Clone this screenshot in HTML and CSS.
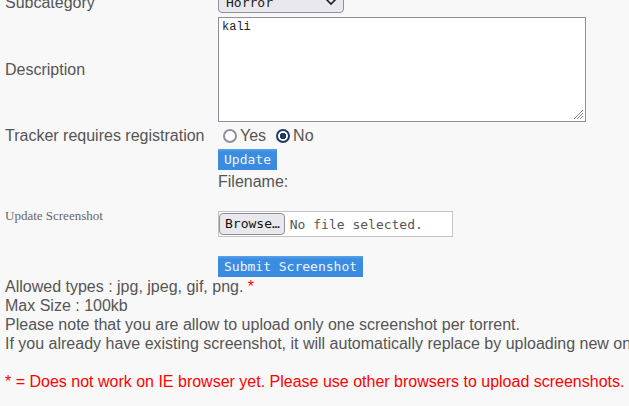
FILE: index.html
```html
<!DOCTYPE html>
<html>
<head>
<meta charset="utf-8">
<link rel="stylesheet" href="styles.css">
</head>
<body>
<div class="page">
  <div class="form-grid">
    <div class="label">Subcategory</div>
    <div class="value">
      <div class="select"><span>Horror</span><svg class="chev" width="12" height="8" viewBox="0 0 12 8"><path d="M1.5 1.5 L6 6 L10.5 1.5" fill="none" stroke="#1b1b1b" stroke-width="1.6"/></svg></div>
    </div>

    <div class="label">Description</div>
    <div class="value">
      <div class="textarea">kali<svg class="grip" width="11" height="11" viewBox="0 0 11 11"><path d="M10 1 L1 10 M10 4 L4 10 M10 7 L7 10" stroke="#8a8a8a" stroke-width="1"/></svg></div>
    </div>

    <div class="label">Tracker requires registration</div>
    <div class="value radios">
      <label class="radio"><span class="dot"></span>Yes</label>
      <label class="radio"><span class="dot checked"></span>No</label>
    </div>

    <div class="label"></div>
    <div class="value stack">
      <button class="btn">Update</button>
      <div class="fname">Filename:</div>
    </div>

    <div class="label serif">Update Screenshot</div>
    <div class="value stack">
      <div class="file"><span class="browse">Browse…</span><span class="nofile">No file selected.</span></div>
      <button class="btn submit">Submit Screenshot</button>
    </div>
  </div>

  <div class="notes">
    <p>Allowed types : jpg, jpeg, gif, png. <span class="red">*</span></p>
    <p>Max Size : 100kb</p>
    <p>Please note that you are allow to upload only one screenshot per torrent.</p>
    <p class="nowrap">If you already have existing screenshot, it will automatically replace by uploading new one.</p>
    <p class="red gap">* = Does not work on IE browser yet. Please use other browsers to upload screenshots.</p>
  </div>
</div>
</body>
</html>
```

FILE: styles.css
```css
html, body {
  margin: 0;
  padding: 0;
  background: #f8f8f8;
  overflow: hidden;
}
body {
  font-family: "Liberation Sans", Arial, sans-serif;
  font-size: 16px;
  color: #555;
  width: 629px;
  height: 406px;
}
.page {
  padding-left: 5px;
  margin-top: -9px;
}
.form-grid {
  display: grid;
  grid-template-columns: 213px auto;
  row-gap: 4px;
  align-items: center;
}
.label {
  line-height: 19px;
  white-space: nowrap;
}
.label.serif {
  font-family: "Liberation Serif", "Times New Roman", serif;
  font-size: 13px;
  line-height: 15px;
  color: #666;
  align-self: start;
  padding-top: 13px;
}
.value {
  line-height: 19px;
}
.select {
  width: 126px;
  height: 22px;
  box-sizing: border-box;
  border: 1px solid #8f8f9d;
  border-radius: 4px;
  background: #e9e9ed;
  display: flex;
  align-items: center;
  justify-content: space-between;
  padding: 0 6px 0 7px;
  font-family: "DejaVu Sans Mono", monospace;
  font-size: 13px;
  color: #1b1b1b;
}
.textarea {
  position: relative;
  width: 368px;
  height: 105px;
  box-sizing: border-box;
  border: 1px solid #8f8f9d;
  background: #fff;
  font-family: "Liberation Mono", "Courier New", monospace;
  font-size: 12px;
  line-height: 14px;
  color: #222;
  padding: 2px 3px;
}
.grip {
  position: absolute;
  right: 1px;
  bottom: 1px;
}
.radios {
  display: flex;
  align-items: center;
  height: 19px;
}
.radio {
  display: flex;
  align-items: center;
  margin-right: 5px;
}
.dot {
  width: 14px;
  height: 14px;
  box-sizing: border-box;
  border: 2px solid #8f8f9d;
  border-radius: 50%;
  margin: 0 3px 0 5px;
  background: #fff;
  display: inline-block;
}
.dot.checked {
  border: 2px solid #1c3a63;
  background: radial-gradient(circle, #1c3a63 0 3px, #fff 3.5px);
}
.stack {
  display: flex;
  flex-direction: column;
  align-items: flex-start;
}
.btn {
  font-family: "DejaVu Sans Mono", monospace;
  font-size: 13px;
  color: #eef4ff;
  background: linear-gradient(#5aa3ea 0, #3b8de2 3px, #3a8be0 100%);
  border: 0;
  padding: 0 6px;
  height: 21px;
  line-height: 21px;
  margin: 0;
}
.fname {
  margin-top: 2px;
}
.file {
  margin-top: 16px;
  width: 235px;
  height: 26px;
  box-sizing: border-box;
  border: 1px solid #c3c3c3;
  background: #fff;
  display: flex;
  align-items: center;
  font-family: "DejaVu Sans Mono", monospace;
  font-size: 13px;
}
.browse {
  background: #e9e9ed;
  border: 1px solid #8f8f9d;
  border-radius: 4px;
  color: #111;
  height: 22px;
  box-sizing: border-box;
  padding: 0 4px 0 5px;
  line-height: 20px;
}
.nofile {
  color: #555;
  margin-left: 5px;
}
.submit {
  margin-top: 19px;
}
.notes p {
  margin: 0;
  line-height: 19px;
  white-space: nowrap;
}
.red {
  color: #ff0000;
}
.notes .gap {
  margin-top: 19px;
}
```
